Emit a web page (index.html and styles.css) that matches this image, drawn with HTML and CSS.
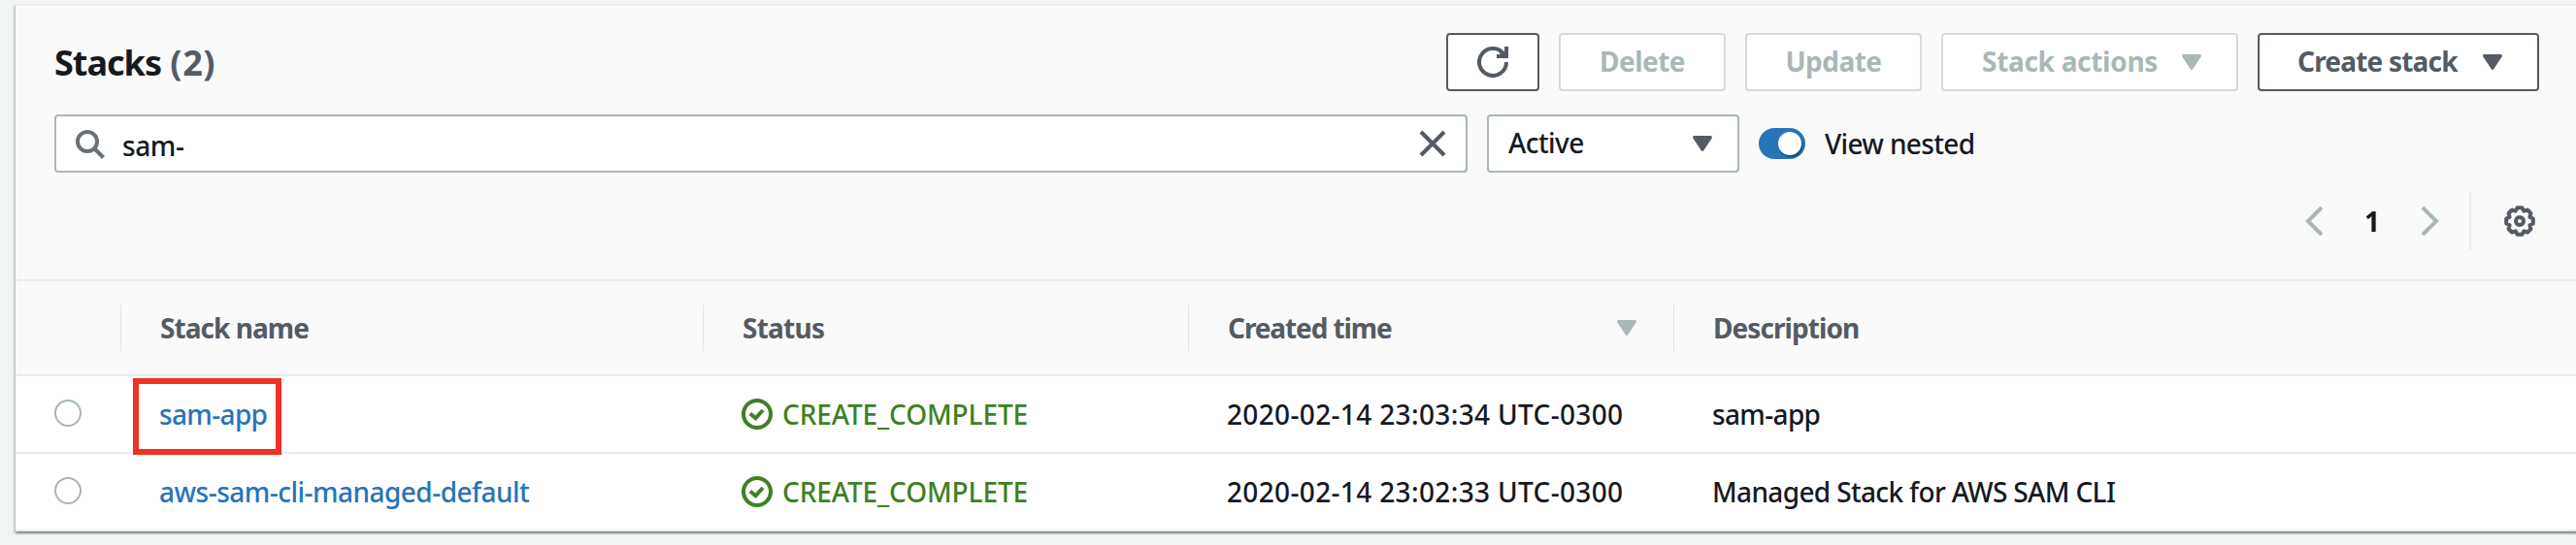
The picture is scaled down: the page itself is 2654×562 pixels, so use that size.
FILE: index.html
```
<!DOCTYPE html>
<html lang="en">
<head>
<meta charset="utf-8">
<title>Stacks</title>
<link rel="stylesheet" href="styles.css">
</head>
<body>
<svg class="defs" aria-hidden="true">
  <symbol id="caret" viewBox="0 0 20 16"><path d="M1.6 1.6H18.4L10 14.4Z" fill="currentColor" stroke="currentColor" stroke-width="3" stroke-linejoin="round"/></symbol>
  <symbol id="check" viewBox="0 0 32 32"><g fill="none" stroke="currentColor" stroke-width="4"><circle cx="16" cy="16" r="14"/><path d="M8.8 15.5L14.5 20.2L22 12"/></g></symbol>
</svg>
<main class="panel">
  <header class="panel-head">
    <div class="bar">
      <h1 class="title">Stacks <span class="count">(2)</span></h1>
      <div class="actions">
        <button class="btn refresh" aria-label="Refresh"><svg width="32" height="32" viewBox="0 0 32 32" fill="none" stroke="currentColor" stroke-width="4"><path d="M30 16A14 14 0 1 1 27.5 8"/><path d="M30 0V10H20"/><path d="M23 5L28 9" stroke-width="3"/></svg></button>
        <button class="btn disabled delete">Delete</button>
        <button class="btn disabled update">Update</button>
        <button class="btn disabled stack-actions"><span>Stack actions</span><svg class="caret"><use href="#caret"/></svg></button>
        <button class="btn create"><span>Create stack</span><svg class="caret"><use href="#caret"/></svg></button>
      </div>
    </div>
    <div class="filters">
      <div class="field search">
        <svg class="magnifier" width="32" height="32" viewBox="0 0 32 32" fill="none" stroke="currentColor" stroke-width="4"><circle cx="12" cy="12" r="10"/><path d="M19 19L28.5 28.5"/></svg>
        <span class="query">sam-</span>
        <svg class="clear" width="28" height="28" viewBox="0 0 28 28" fill="none" stroke="currentColor" stroke-width="4"><path d="M2 2L26 26M26 2L2 26"/></svg>
      </div>
      <div class="field select"><span>Active</span><svg class="caret"><use href="#caret"/></svg></div>
      <div class="toggle"><span class="knob"></span></div>
      <span class="toggle-label">View nested</span>
    </div>
    <div class="paging">
      <svg class="chevron" width="20" height="32" viewBox="0 0 20 32"><path d="M17 2L3 16L17 30"/></svg>
      <span class="page">1</span>
      <svg class="chevron" width="20" height="32" viewBox="0 0 20 32"><path d="M3 2L17 16L3 30"/></svg>
      <span class="divider"></span>
      <svg class="gear" width="32" height="32" viewBox="0 0 32 32" fill="none" stroke="currentColor" stroke-width="4" stroke-linejoin="round"><path d="M13.57 2.21L18.43 2.21L20.29 5.65L24.03 4.53L27.47 7.97L26.35 11.71L29.79 13.57L29.79 18.43L26.35 20.29L27.47 24.03L24.03 27.47L20.29 26.35L18.43 29.79L13.57 29.79L11.71 26.35L7.97 27.47L4.53 24.03L5.65 20.29L2.21 18.43L2.21 13.57L5.65 11.71L4.53 7.97L7.97 4.53L11.71 5.65Z"/><circle cx="16" cy="16" r="4"/></svg>
    </div>
  </header>
  <section class="table">
    <div class="row head">
      <div></div>
      <div class="th name">Stack name</div>
      <div class="th status-h">Status</div>
      <div class="th created-h">Created time<svg class="caret sort"><use href="#caret"/></svg></div>
      <div class="th description-h">Description</div>
    </div>
    <div class="row">
      <div class="pick"><span class="radio"></span></div>
      <div class="td marked"><a class="link app">sam-app</a></div>
      <div class="td status"><svg class="ok"><use href="#check"/></svg><span>CREATE_COMPLETE</span></div>
      <div class="td created">2020-02-14 23:03:34 UTC-0300</div>
      <div class="td app">sam-app</div>
    </div>
    <div class="row">
      <div class="pick"><span class="radio"></span></div>
      <div class="td"><a class="link managed">aws-sam-cli-managed-default</a></div>
      <div class="td status"><svg class="ok"><use href="#check"/></svg><span>CREATE_COMPLETE</span></div>
      <div class="td created">2020-02-14 23:02:33 UTC-0300</div>
      <div class="td description">Managed Stack for AWS SAM CLI</div>
    </div>
  </section>
</main>
</body>
</html>
```
FILE: styles.css
```
*, *::after { box-sizing: border-box; }
body {
  margin: 0;
  height: 562px;
  padding: 4px 0 0 16px;
  overflow: hidden;
  background: #f2f3f3;
  color: #16191f;
  font: 500 28px/38px "Noto Sans", sans-serif;
  white-space: nowrap;
}
svg { flex: none; display: block; }
.defs { position: absolute; width: 0; height: 0; }
.caret { width: 20px; height: 16px; }

.panel {
  width: 2640px;
  border-top: 2px solid #eaeded;
  background: #fff;
  box-shadow: 0 2px 2px rgba(0,28,36,.3), 2px 2px 2px rgba(0,28,36,.15), -2px 2px 2px rgba(0,28,36,.15);
}
.panel-head {
  height: 284px;
  padding: 28px 40px 0;
  background: #fafafa;
  border-bottom: 2px solid #eaeded;
}
.bar { display: flex; justify-content: space-between; align-items: center; height: 60px; }
.title { margin: 0; padding-top: 2px; font-size: 36px; line-height: 60px; font-weight: 700; letter-spacing: -1px; }
.count { color: #545b64; letter-spacing: .6px; margin-left: 1px; }
.actions { display: flex; gap: 20px; }
.btn {
  display: flex;
  align-items: center;
  justify-content: center;
  height: 60px;
  padding: 0 0 2px;
  border: 2px solid #545b64;
  border-radius: 4px;
  background: #fff;
  color: #545b64;
  font: 700 28px/38px "Noto Sans", sans-serif;
}
.btn.disabled { color: #aab7b8; border-color: #d5dbdb; }
.refresh { width: 96px; padding: 0; }
.delete { width: 172px; letter-spacing: -.5px; }
.update { width: 182px; letter-spacing: -.5px; }
.stack-actions { width: 306px; letter-spacing: -.3px; justify-content: space-between; padding: 0 36px 2px 40px; }
.create { width: 290px; letter-spacing: -.8px; justify-content: space-between; padding: 0 36px 2px 39px; }
.btn .caret { margin-top: 2px; }

.filters { display: flex; align-items: center; margin-top: 24px; height: 60px; }
.field {
  display: flex;
  align-items: center;
  height: 60px;
  border: 2px solid #aab7b8;
  border-radius: 4px;
  background: #fff;
}
.search { width: 1456px; padding: 0 20px; color: #545b64; }
.magnifier { color: #687078; margin-top: 4px; }
.query { flex: 1; margin: 3px 0 0 16px; color: #16191f; letter-spacing: -.4px; }
.select { width: 260px; margin-left: 20px; padding: 0 26px 2px 20px; justify-content: space-between; letter-spacing: -.6px; }
.select .caret { color: #545b64; margin-top: 2px; }
.toggle { display: flex; align-items: center; justify-content: flex-end; width: 48px; height: 32px; margin-left: 20px; padding-right: 4px; border-radius: 16px; background: #2774b9; }
.knob { width: 24px; height: 24px; border-radius: 50%; background: #fff; box-shadow: 1px 2px 2px rgba(0,0,0,.4); }
.toggle-label { margin: -1px 0 0 20px; letter-spacing: -.65px; }

.paging { display: flex; align-items: center; justify-content: flex-end; height: 60px; margin-top: 20px; padding-right: 4px; }
.chevron { fill: none; stroke: #aab7b8; stroke-width: 4; }
.page { width: 98px; text-align: center; font-weight: 700; }
.divider { width: 2px; height: 60px; margin: 0 34px 0 31px; background: #eaeded; }
.gear { color: #545b64; }

.row { display: grid; grid-template-columns: 108px 600px 500px 500px 1fr; height: 80px; align-items: center; border-bottom: 2px solid #eaeded; }
.head { height: 98px; background: #fafafa; color: #545b64; font-weight: 700; }
.th { display: flex; align-items: center; justify-content: space-between; height: 48px; padding: 0 38px 0 40px; border-left: 1px solid #e3e6e6; }
.name { letter-spacing: -.95px; }
.status-h { letter-spacing: -.75px; }
.created-h { letter-spacing: -1.1px; }
.description-h { letter-spacing: -.93px; }
.sort { color: #aab7b8; }
.td { padding-left: 40px; }
.pick { padding: 0 0 2px 40px; }
.radio { display: block; width: 28px; height: 28px; border: 2px solid #aab7b8; border-radius: 50%; background: #fff; }
.link { color: #2774b9; }
.app { letter-spacing: -.65px; }
.managed { letter-spacing: -.52px; }
.created { letter-spacing: .35px; }
.description { letter-spacing: -.65px; }
.status { display: flex; align-items: center; gap: 10px; color: #3f8024; letter-spacing: -.12px; }
.ok { width: 32px; height: 32px; }
.marked { position: relative; }
.marked::after {
  content: "";
  position: absolute;
  left: 13px;
  top: -18px;
  width: 153px;
  height: 79px;
  border: 6px solid #ee3223;
}
```
